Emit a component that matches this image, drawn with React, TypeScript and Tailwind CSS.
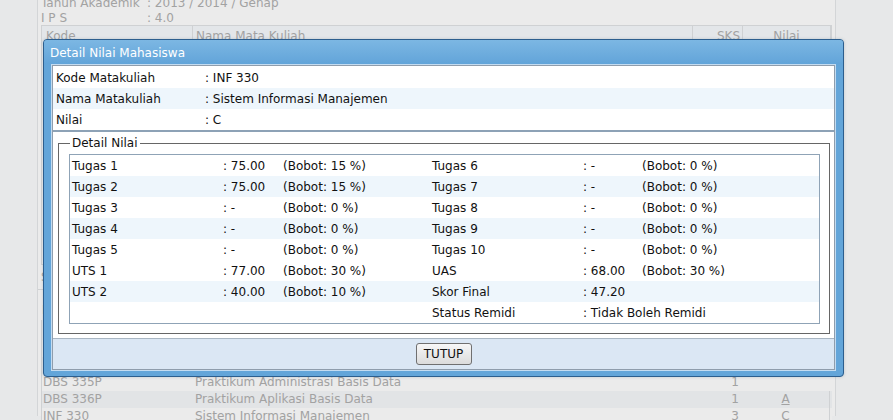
const infoRows = [
  { label: 'Kode Matakuliah', value: 'INF 330' },
  { label: 'Nama Matakuliah', value: 'Sistem Informasi Manajemen' },
  { label: 'Nilai', value: 'C' },
];

const nilaiRows = [
  ['Tugas 1', '75.00', '(Bobot: 15 %)', 'Tugas 6', '-', '(Bobot: 0 %)'],
  ['Tugas 2', '75.00', '(Bobot: 15 %)', 'Tugas 7', '-', '(Bobot: 0 %)'],
  ['Tugas 3', '-', '(Bobot: 0 %)', 'Tugas 8', '-', '(Bobot: 0 %)'],
  ['Tugas 4', '-', '(Bobot: 0 %)', 'Tugas 9', '-', '(Bobot: 0 %)'],
  ['Tugas 5', '-', '(Bobot: 0 %)', 'Tugas 10', '-', '(Bobot: 0 %)'],
  ['UTS 1', '77.00', '(Bobot: 30 %)', 'UAS', '68.00', '(Bobot: 30 %)'],
  ['UTS 2', '40.00', '(Bobot: 10 %)', 'Skor Final', '47.20', ''],
  ['', null, '', 'Status Remidi', 'Tidak Boleh Remidi', ''],
];

const striped = [false, true, false, true, false, false, true, false];

const bgRows = [
  { kode: 'DBS 331', nama: 'Administrasi Basis Data', sks: '2', nilai: 'B' },
  { kode: 'DBS 332', nama: 'Aplikasi Basis Data', sks: '2', nilai: 'A' },
  { kode: 'DBS 335P', nama: 'Praktikum Administrasi Basis Data', sks: '1', nilai: '' },
  { kode: 'DBS 336P', nama: 'Praktikum Aplikasi Basis Data', sks: '1', nilai: 'A' },
  { kode: 'INF 330', nama: 'Sistem Informasi Manajemen', sks: '3', nilai: 'C' },
];

export default function App() {
  return (
    <div className="relative h-[420px] w-[893px] overflow-hidden bg-[#e7e8e9] font-['DejaVu_Sans',sans-serif] text-[12px]">
      <BackgroundPage />
      <NilaiDialog />
    </div>
  );
}

function BackgroundPage() {
  return (
    <div className="ml-[37px] h-full w-[799px] border-x border-[#d3d5d7] bg-[#ebebeb] text-[#a2a2a2]">
      <div className="-mt-[4px] pl-[3px] leading-[14px]">
        <div className="grid grid-cols-[106px_1fr]">
          <span>Tahun Akademik</span>
          <span>: 2013 / 2014 / Genap</span>
        </div>
        <div className="grid grid-cols-[106px_1fr] pt-px">
          <span>I P S</span>
          <span>: 4.0</span>
        </div>
      </div>
      <div className="mx-[3px] h-[240px] border border-[#cfd1d3]">
        <div className="grid h-[20px] grid-cols-[150px_500px_50px_1fr] items-center bg-[#e3e6e9] leading-[20px]">
          <span className="pl-[4px]">Kode</span>
          <span className="border-l border-[#cfd1d3] pl-[3px]">Nama Mata Kuliah</span>
          <span className="border-l border-[#cfd1d3] pr-[2px] text-right">SKS</span>
          <span className="border-x border-[#cfd1d3] text-center">Nilai</span>
        </div>
      </div>
      <div className="mt-[5px] pl-[3px] leading-[14px]">Semester : 6</div>
      <div className="mt-[5px] h-px bg-[#cfd1d3]" />
      <div className="mt-[13px] pl-[4px] leading-[14px]">IPK : 3.58</div>
      <div className="mx-[3px] mt-[3px] border-l border-[#cfd1d3]">
        <div className="grid h-[20px] grid-cols-[150px_500px_50px_1fr] items-center bg-[#e3e6e9]">
          <span className="pl-[4px]">Kode</span>
          <span className="pl-[3px]">Nama Mata Kuliah</span>
          <span className="pr-[2px] text-right">SKS</span>
          <span className="text-center">Nilai</span>
        </div>
        {bgRows.map((row, i) => (
          <div
            key={row.kode}
            className={`grid h-[17px] grid-cols-[150px_500px_50px_88px] items-center leading-[17px] ${i % 2 === 1 ? 'bg-[#e2e4e6]' : 'bg-[#ebebeb]'}`}
          >
            <span className="pl-[1px]">{row.kode}</span>
            <span className="pl-[3px]">{row.nama}</span>
            <span className="pr-[3px] text-right">{row.sks}</span>
            <span className={`border-r border-[#cfd1d3] text-center ${row.nilai === 'A' ? 'underline' : ''}`}>{row.nilai}</span>
          </div>
        ))}
      </div>
    </div>
  );
}

function NilaiDialog() {
  return (
    <div className="absolute left-[43px] top-[39px] flex h-[338px] w-[801px] flex-col rounded-[4px] border border-[#2c5e8e] bg-[#63a5d9] shadow-[0_0_3px_rgba(60,90,120,0.25)]">
      <div className="flex h-[24px] items-center rounded-t-[3px] bg-gradient-to-b from-[#7cb7e3] to-[#62a4d9] pl-[6px] pt-[2px] text-white">
        Detail Nilai Mahasiswa
      </div>
      <div className="mx-[8px] mt-[1px] mb-[6px] flex flex-1 flex-col border border-[#8f9dac] bg-white text-[#111] shadow-[0_0_0_1px_#c4dcf1]">
        <div className="pt-[1px]">
          {infoRows.map((row, i) => (
            <div
              key={row.label}
              className={`grid h-[21px] grid-cols-[152px_1fr] pt-px leading-[20px] ${i === 1 ? 'bg-[#eef6fc]' : ''}`}
            >
              <span className="pl-[3px]">{row.label}</span>
              <span>: {row.value}</span>
            </div>
          ))}
        </div>
        <div className="h-[2px] bg-[#8da2b6]" />
        <div className="h-[206px] pt-[4px]">
          <fieldset className="ml-[5px] w-[772px] border border-[#666] pb-[9px] pl-[10px] pr-[9px] pt-[4px]">
            <legend className="ml-px px-[2px] pt-px leading-[13px]">Detail Nilai</legend>
            <div className="border border-[#8fa3b6]">
              {nilaiRows.map((row, i) => (
                <div
                  key={i}
                  className={`grid h-[21px] grid-cols-[151px_60px_149px_151px_59px_179px] pt-px leading-[20px] ${striped[i] ? 'bg-[#eef6fc]' : ''}`}
                >
                  <span className="pl-[2px]">{row[0]}</span>
                  <span className="whitespace-nowrap pl-[2px]">{row[1] === null ? '' : `: ${row[1]}`}</span>
                  <span className="pl-[2px]">{row[2]}</span>
                  <span className="pl-[2px]">{row[3]}</span>
                  <span className="whitespace-nowrap pl-[2px]">: {row[4]}</span>
                  <span className="pl-[2px]">{row[5]}</span>
                </div>
              ))}
            </div>
          </fieldset>
        </div>
        <div className="h-px bg-[#a9b6c3]" />
        <div className="flex flex-1 items-center justify-center bg-[#dbe7f4]">
          <button className="h-[22px] w-[56px] rounded-[3px] border border-[#707070] bg-gradient-to-b from-[#f7f7f7] to-[#dcdcdc] text-[12px] leading-[20px] text-[#111]">
            TUTUP
          </button>
        </div>
      </div>
    </div>
  );
}
